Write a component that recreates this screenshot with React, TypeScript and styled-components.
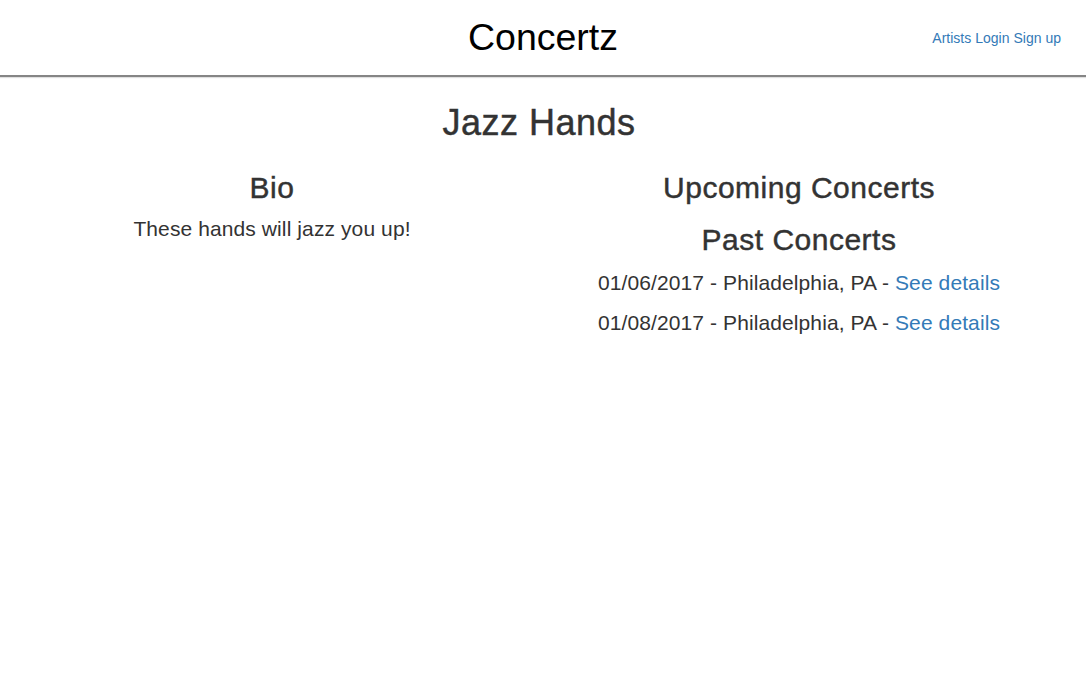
import styled, { createGlobalStyle } from "styled-components";

const GlobalStyle = createGlobalStyle`
  html, body {
    margin: 0;
    padding: 0;
    background: #fff;
  }

  body {
    font-family: "Liberation Sans", Arial, Helvetica, sans-serif;
    color: #333;
  }
`;

const HeaderStyles = styled.header`
  display: grid;
  grid-template-columns: 1fr auto 1fr;
  align-items: center;
  height: 75px;
  padding: 0 25px;
  border-bottom: 2px solid #858585;
  box-shadow: 0 1px 1px rgba(0, 0, 0, 0.12);

  & > h1 {
    grid-column: 2;
    margin: 0;
    font-size: 37.5px;
    font-weight: 400;
    line-height: 75px;
    color: #000;
  }
`;

const NavStyles = styled.nav`
  justify-self: end;
  display: flex;
  gap: 4px;
  font-size: 14px;
  line-height: 20px;
`;

const LinkStyles = styled.a`
  color: #337ab7;
  text-decoration: none;
`;

const PageTitle = styled.h1`
  margin: 26px 0 0;
  padding-right: 8px;
  text-align: center;
  font-size: 36px;
  font-weight: 400;
  line-height: 39.6px;
  letter-spacing: 0.5px;
  -webkit-text-stroke: 0.45px #333;
`;

const ColumnsStyles = styled.section`
  display: grid;
  grid-template-columns: 544px 510px;
  margin-top: 28px;
`;

const ColumnStyles = styled.article`
  text-align: center;
`;

const SectionTitle = styled.h2<{ $top?: number }>`
  margin: ${({ $top }) => $top ?? 0}px 0 0;
  font-size: 30px;
  font-weight: 400;
  line-height: 33px;
  letter-spacing: 0.5px;
  -webkit-text-stroke: 0.45px #333;
`;

const TextStyles = styled.p<{ $top?: number }>`
  margin: ${({ $top }) => $top ?? 0}px 0 10px;
  font-size: 21px;
  line-height: 30px;
  letter-spacing: 0.1px;
`;

const concerts = [
  { date: "01/06/2017", city: "Philadelphia, PA" },
  { date: "01/08/2017", city: "Philadelphia, PA" },
];

function App() {
  return (
    <>
      <GlobalStyle />
      <HeaderStyles>
        <h1>Concertz</h1>
        <NavStyles>
          <LinkStyles href="#">Artists</LinkStyles>
          <LinkStyles href="#">Login</LinkStyles>
          <LinkStyles href="#">Sign up</LinkStyles>
        </NavStyles>
      </HeaderStyles>

      <main>
        <PageTitle>Jazz Hands</PageTitle>

        <ColumnsStyles>
          <ColumnStyles>
            <SectionTitle>Bio</SectionTitle>
            <TextStyles $top={10}>These hands will jazz you up!</TextStyles>
          </ColumnStyles>

          <ColumnStyles>
            <SectionTitle>Upcoming Concerts</SectionTitle>
            <SectionTitle $top={19}>Past Concerts</SectionTitle>
            {concerts.map((c, i) => (
              <TextStyles key={c.date} $top={i === 0 ? 12 : 0}>
                {c.date} - {c.city} - <LinkStyles href="#">See details</LinkStyles>
              </TextStyles>
            ))}
          </ColumnStyles>
        </ColumnsStyles>
      </main>
    </>
  );
}

export default App;
